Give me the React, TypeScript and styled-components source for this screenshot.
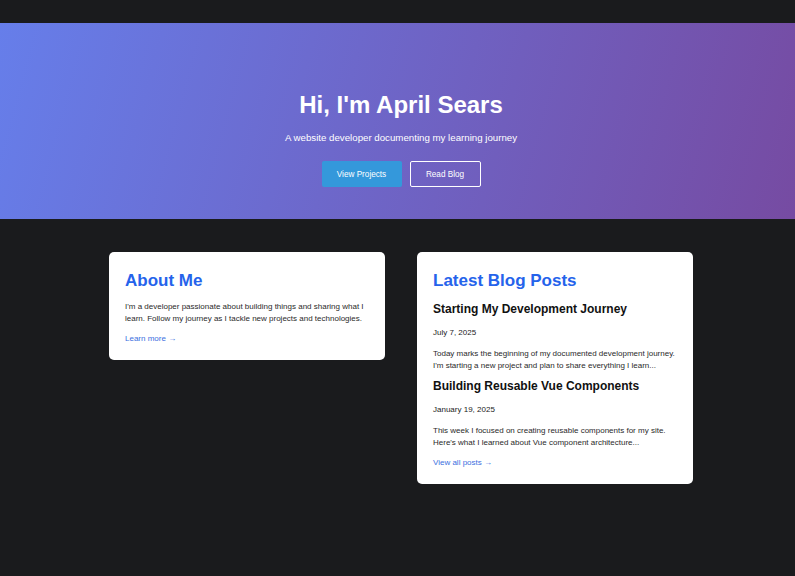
import React from "react";
import styled, { createGlobalStyle } from "styled-components";

const Global = createGlobalStyle`
  html, body { margin: 0; padding: 0; background: #1a1b1d; }
  body { font-family: "Liberation Sans", Arial, sans-serif; min-height: 576px; }
  * { box-sizing: border-box; }
`;

const TopBar = styled.header`
  height: 23px;
  background: #1a1b1d;
`;

const Hero = styled.section`
  background: linear-gradient(105deg, #667eea 0%, #764ba2 100%);
  height: 196px;
  display: flex;
  flex-direction: column;
  align-items: center;
  padding: 68px 0 0 7px;
  color: #fff;
`;

const HeroTitle = styled.h1`
  margin: 0;
  font-size: 24px;
  font-weight: 700;
  line-height: 28px;
`;

const HeroSub = styled.p`
  margin: 12px 0 0;
  font-size: 9.7px;
  line-height: 14px;
`;

const Buttons = styled.div`
  display: flex;
  gap: 8px;
  margin-top: 16px;
`;

const Btn = styled.a<{ $outline?: boolean }>`
  display: inline-flex;
  align-items: center;
  justify-content: center;
  height: 26px;
  width: ${p => (p.$outline ? "71px" : "80px")};
  font-size: 8.2px;
  color: #fff;
  text-decoration: none;
  border-radius: 2px;
  background: ${p => (p.$outline ? "transparent" : "#3498db")};
  border: 1px solid ${p => (p.$outline ? "#fff" : "transparent")};
`;

const Main = styled.main`
  display: grid;
  grid-template-columns: 276px 276px;
  gap: 32px;
  justify-content: center;
  align-items: start;
  padding: 33px 0 0 7px;
`;

const Card = styled.div`
  background: #fff;
  border-radius: 5px;
  padding: 19px 16px 15px;
`;

const CardTitle = styled.h2`
  margin: 0 0 10px;
  color: #2563eb;
  font-size: 17px;
  font-weight: 700;
  line-height: 20px;
`;

const Text = styled.p`
  margin: 0;
  font-size: 8px;
  line-height: 12px;
  color: #2a2a2a;
`;

const More = styled.a`
  display: block;
  margin-top: 8px;
  font-size: 8px;
  line-height: 12px;
  color: #3b6fe0;
  text-decoration: none;
`;

const PostTitle = styled.h3`
  margin: 0 0 10px;
  font-size: 12px;
  font-weight: 700;
  line-height: 16px;
  color: #111;
`;

const PostDate = styled.div`
  font-size: 8px;
  line-height: 12px;
  color: #222;
  margin-bottom: 9px;
`;

const Post = styled.article`
  margin-bottom: 6px;
`;

const posts = [
  {
    title: "Starting My Development Journey",
    date: "July 7, 2025",
    lines: [
      "Today marks the beginning of my documented development journey.",
      "I'm starting a new project and plan to share everything I learn...",
    ],
  },
  {
    title: "Building Reusable Vue Components",
    date: "January 19, 2025",
    lines: [
      "This week I focused on creating reusable components for my site.",
      "Here's what I learned about Vue component architecture...",
    ],
  },
];

export default function App() {
  return (
    <>
      <Global />
      <TopBar />
      <Hero>
        <HeroTitle>Hi, I'm April Sears</HeroTitle>
        <HeroSub>A website developer documenting my learning journey</HeroSub>
        <Buttons>
          <Btn href="#">View Projects</Btn>
          <Btn href="#" $outline>Read Blog</Btn>
        </Buttons>
      </Hero>
      <Main>
        <Card>
          <CardTitle>About Me</CardTitle>
          <Text>
            I'm a developer passionate about building things and sharing what I
            <br />
            learn. Follow my journey as I tackle new projects and technologies.
          </Text>
          <More href="#">Learn more →</More>
        </Card>
        <Card>
          <CardTitle>Latest Blog Posts</CardTitle>
          {posts.map(p => (
            <Post key={p.title}>
              <PostTitle>{p.title}</PostTitle>
              <PostDate>{p.date}</PostDate>
              <Text>
                {p.lines[0]}
                <br />
                {p.lines[1]}
              </Text>
            </Post>
          ))}
          <More href="#">View all posts →</More>
        </Card>
      </Main>
    </>
  );
}
